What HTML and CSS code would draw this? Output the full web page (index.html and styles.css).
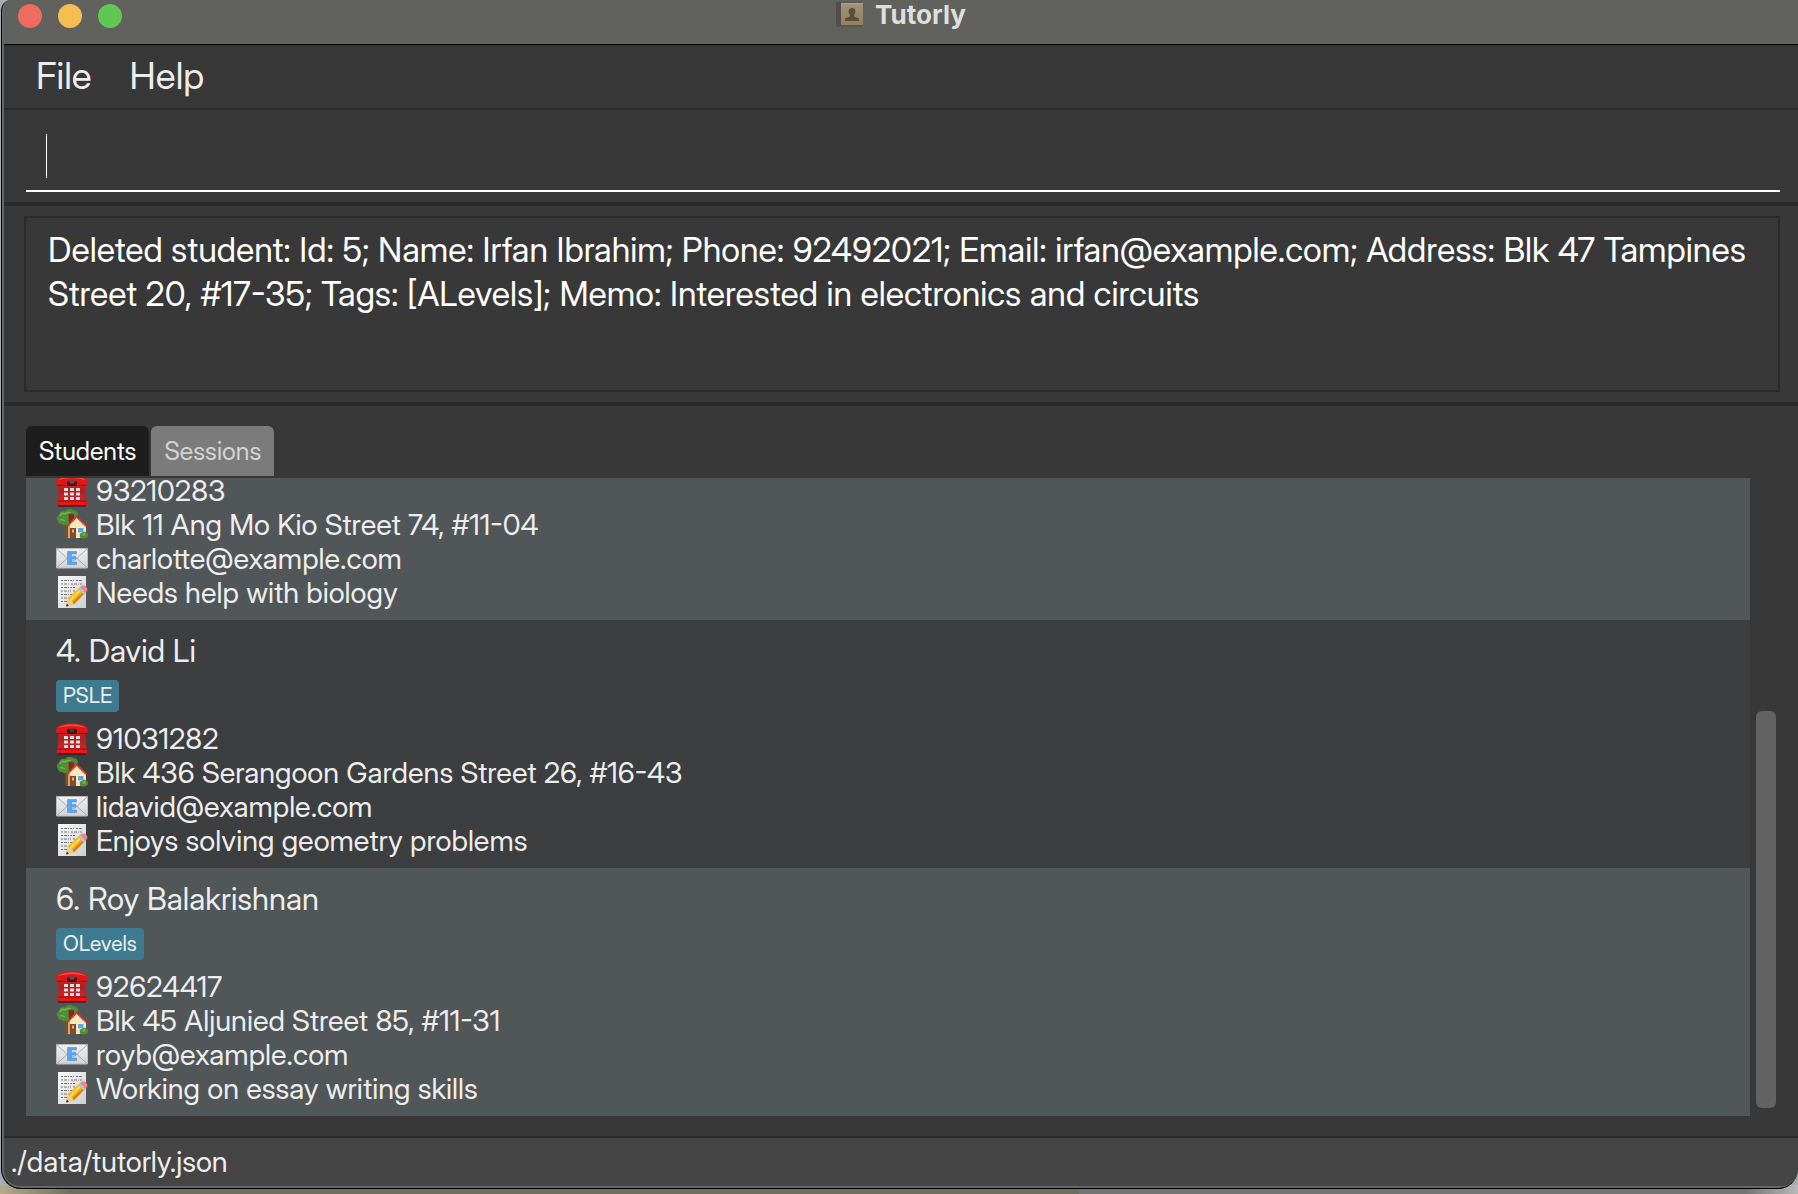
FILE: index.html
```html
<!DOCTYPE html>
<html lang="en">
<head>
<meta charset="utf-8">
<title>Tutorly</title>
<link rel="stylesheet" href="styles.css">
</head>
<body>
<svg class="sprite" aria-hidden="true">
  <defs>
    <linearGradient id="red" x1="0" y1="0" x2="0" y2="1"><stop offset="0" stop-color="#d8201e"/><stop offset=".4" stop-color="#b02024"/><stop offset="1" stop-color="#c42a2c"/></linearGradient>
    <linearGradient id="paper" x1="0" y1="0" x2="1" y2="1"><stop offset="0" stop-color="#fafafa"/><stop offset="1" stop-color="#cfcfcf"/></linearGradient>
    <linearGradient id="letter" x1="0" y1="0" x2="0" y2="1"><stop offset="0" stop-color="#f0f0f0"/><stop offset="1" stop-color="#d2d2d2"/></linearGradient>
    <linearGradient id="book" x1="0" y1="0" x2="0" y2="1"><stop offset="0" stop-color="#a1937a"/><stop offset="1" stop-color="#94805a"/></linearGradient>
  </defs>
  <symbol id="phone" viewBox="0 0 32 34">
    <path d="M1.500 28 2.500 12.500 7 9h18l4.500 3.500 1 15.500z" fill="url(#red)"/>
    <path d="M1 27h30v4.500H1z" fill="#ee1414"/><path d="M1 26.500h30v1H1z" fill="#8d1012"/><path d="M2 31.500h28v1H2z" fill="#310708"/>
    <path d="M11 7.500h3v2h4v-2h3V12H11z" fill="#4a1112"/>
    <path d="M0 9C0 3 7 1.500 16 1.500S32 3 32 9l-1 3-8.500.5-1.500-5Q16 5.500 11 7.500l-1.500 5L1 12z" fill="#df1718"/>
    <path d="M2 6Q7 2.500 16 2.500T30 6Q24 4 16 4T2 6" fill="#f45b50"/>
    <path d="M1 11.500h8.500M22.500 11.500H31" stroke="#8a1012"/>
    <path d="M8 14h4v3H8zm6 0h4v3h-4zm6 0h4v3h-4zM8 18.500h4v3H8zm6 0h4v3h-4zm6 0h4v3h-4zM8 23h4v3H8zm6 0h4v3h-4zm6 0h4v3h-4z" fill="#ecdcdc"/>
  </symbol>
  <symbol id="house" viewBox="0 0 32 34">
    <path d="M9 12h4l-1 18H9.500z" fill="#79512b"/>
    <path d="M2 13Q-1 9 3 7 4 2 9 3q4-4 8-1 5 0 5 5l-6 6-5 4q-3 1-5-1-4 0-4-3" fill="#4c8f32"/>
    <path d="M4 8q2-4 5-2 3-3 6-1M4 12q3-1 5 1" stroke="#72b34a" stroke-width="1.500" fill="none"/>
    <path d="M12 17 20.500 8.500 30 17v13H12z" fill="#f8e6bd"/>
    <path d="M12 16h2v14.500l-2-1z" fill="#cda873"/>
    <path d="M12.500 6.500 15 5.500l3 1V12l-5 4z" fill="#8e2423"/>
    <path d="M10 18.500 20.500 7 31.500 18l-1 1.500L20.500 10 11 19.500z" fill="#d33329"/>
    <path d="M14 20h6v10h-6z" fill="#8a482b"/><path d="M16 21.500h2v3h-2z" fill="#d7b37b"/>
    <path d="M21.500 19.500h6.500v5.500h-6.500z" fill="#eff6fa"/><path d="M22 20h5.500v4.500H22z" fill="#60a8dc"/>
    <path d="M24 28q-1-3 2-3 2-2 4-.5 2 0 2 3 0 3-4.500 3T24 28" fill="#538d32"/><circle cx="28" cy="26.500" r="1.500" fill="#78af45"/>
  </symbol>
  <symbol id="mail" viewBox="0 0 32 34">
    <path d="M.5 6.500h31v19.500H.5z" fill="url(#letter)" stroke="#bdbdbd"/>
    <path d="m1 7 12 11q3 2 6 0L31 7M1 25.500l10-9m20 9-10-9" stroke="#aaa" fill="none"/>
    <path d="M11.500 9.500h9V12h-5v2.500H20V17h-4.500v3h5v2.500h-9z" fill="#55a8f6" stroke="#4384cc" stroke-width=".5"/>
  </symbol>
  <symbol id="memo" viewBox="0 0 32 34">
    <path d="M2 0h28v32H2z" fill="url(#paper)"/>
    <path d="M5 4.500h13m2 0h6M5 8h8m2 0h11M5 11.500h14M5 15h10m2 0h4M5 18.500h11M5 22h8M5 25.500h6" stroke="#777" stroke-dasharray="2 1 3 1 1 1" fill="none"/>
    <path d="m12 22.500-2 8 8-2 11.500-12-5.500-5.500z" fill="#f4b41b"/>
    <path d="m14 24.500 12-12" stroke="#ffdc55" stroke-width="2"/>
    <path d="m18 28.500 11.500-12-1.800-1.800-12 12z" fill="#d7890e"/>
    <path d="m12 22.500-2 8 8-2-2-3z" fill="#eccb94"/><path d="m10.800 27.500-.8 3 3-.8z" fill="#333"/>
    <path d="m22 13 2-2 5.500 5-2.200 2.500z" fill="#b8c0c2"/>
    <path d="m24 11 1.500-1.200q2.500-1 4.500.7 2 2 1 4.500L29.500 16.500z" fill="#ef8589"/>
  </symbol>
</svg>

<main class="window">
  <header class="titlebar">
    <div class="lights">
      <button class="light close" aria-label="Close"></button>
      <button class="light minimise" aria-label="Minimise"></button>
      <button class="light zoom" aria-label="Zoom"></button>
    </div>
    <h1 class="title">
      <svg class="app-icon" viewBox="0 0 28 26" aria-hidden="true">
        <path d="M1 1h26v25H1z" fill="#565550"/><path d="M0 1h5v24H0z" fill="#514f4b"/>
        <path d="M5 2h22v22H5z" fill="url(#book)"/><path d="M5 2h22v1H5z" fill="#b0a58b"/>
        <path d="M16 7c4 0 4 4 2.500 6l-.5 2.500 5 2V20H9v-2.500l5-2-.5-2.500C12 11 12 7 16 7z" fill="#57503f"/>
      </svg>
      Tutorly
    </h1>
  </header>

  <nav class="menubar">
    <button class="menu">File</button>
    <button class="menu">Help</button>
  </nav>

  <section class="command">
    <input class="command-input" type="text" aria-label="Command">
  </section>

  <section class="result">
    <output class="result-box">Deleted student: Id: 5; Name: Irfan Ibrahim; Phone: 92492021; Email: irfan@example.com; Address: Blk 47 Tampines Street 20, #17-35; Tags: [ALevels]; Memo: Interested in electronics and circuits</output>
  </section>

  <section class="content">
    <div class="tabs" role="tablist">
      <button class="tab selected" role="tab" aria-selected="true">Students</button>
      <button class="tab" role="tab" aria-selected="false">Sessions</button>
    </div>
    <div class="panel">
      <ul class="list">
        <li class="card alt">
          <p class="line"><svg class="icon"><use href="#phone"/></svg>93210283</p>
          <p class="line"><svg class="icon"><use href="#house"/></svg>Blk 11 Ang Mo Kio Street 74, #11-04</p>
          <p class="line"><svg class="icon"><use href="#mail"/></svg>charlotte@example.com</p>
          <p class="line"><svg class="icon"><use href="#memo"/></svg>Needs help with biology</p>
        </li>
        <li class="card">
          <h2 class="name">4. David Li</h2>
          <span class="tag">PSLE</span>
          <p class="line"><svg class="icon"><use href="#phone"/></svg>91031282</p>
          <p class="line"><svg class="icon"><use href="#house"/></svg>Blk 436 Serangoon Gardens Street 26, #16-43</p>
          <p class="line"><svg class="icon"><use href="#mail"/></svg>lidavid@example.com</p>
          <p class="line"><svg class="icon"><use href="#memo"/></svg>Enjoys solving geometry problems</p>
        </li>
        <li class="card alt">
          <h2 class="name">6. Roy Balakrishnan</h2>
          <span class="tag">OLevels</span>
          <p class="line"><svg class="icon"><use href="#phone"/></svg>92624417</p>
          <p class="line"><svg class="icon"><use href="#house"/></svg>Blk 45 Aljunied Street 85, #11-31</p>
          <p class="line"><svg class="icon"><use href="#mail"/></svg>royb@example.com</p>
          <p class="line"><svg class="icon"><use href="#memo"/></svg>Working on essay writing skills</p>
        </li>
      </ul>
      <div class="scrollbar"><div class="thumb"></div></div>
    </div>
  </section>

  <footer class="statusbar">./data/tutorly.json</footer>
</main>
</body>
</html>
```
FILE: styles.css
```css
* { box-sizing: border-box; }

body {
  margin: 0;
  height: 100vh;
  padding: 0 0 5px 1px;
  overflow: hidden;
  background:
    linear-gradient(90deg, #b5ab8c, #716e60 4%, #716e60 60%, #737373 60%, #737373 97%, #b8b8b8) bottom / 100% 9px no-repeat,
    #a9abb2;
  font-family: "Inter Display", "Inter Tight", Inter, "Liberation Sans", sans-serif;
  font-variation-settings: "opsz" 32;
  color: #ededed;
}

button, input { font: inherit; font-variation-settings: inherit; color: inherit; border: 0; background: none; }
h1, h2, p, ul { margin: 0; padding: 0; font-weight: 400; }

.sprite { position: absolute; width: 0; height: 0; }

.window {
  display: flex;
  flex-direction: column;
  height: 100%;
  overflow: hidden;
  border: 1px solid #000;
  border-top: 0;
  border-right: 0;
  border-radius: 10px 0 20px 20px;
  padding: 0 0 2px 2px;
  background: #62686a;
}

.titlebar {
  display: grid;
  grid-template-columns: 1fr auto 1fr;
  height: 46px;
  flex: none;
  background: #61615e;
  border-bottom: 1px solid #2c2c2c;
  box-shadow: inset 0 -1px #000;
}
.lights { display: flex; gap: 16px; padding: 4px 0 0 14px; }
.light { width: 24px; height: 24px; padding: 0; border-radius: 50%; }
.close { background: #ed6b5f; }
.minimise { background: #f5bf4f; }
.zoom { background: #62c655; }
.title {
  display: flex;
  gap: 11px;
  font-family: Inter, "Liberation Sans", sans-serif;
  font-variation-settings: normal;
  font-size: 26px;
  font-weight: 700;
  line-height: 30px;
  color: #dededd;
}
.app-icon { width: 28px; height: 26px; margin-top: 1px; }

.menubar {
  display: flex;
  gap: 38px;
  height: 64px;
  flex: none;
  padding: 0 32px;
  background: #383838;
  border-bottom: 2px solid #2b2b2b;
}
.menu { height: 60px; padding: 0; font-size: 37px; line-height: 58px; }

.command {
  position: relative;
  flex: none;
  padding: 12px 18px 10px 22px;
  background: #383838;
  border-bottom: 4px solid #292929;
}
.command::before {
  content: "";
  position: absolute;
  left: 42px;
  top: 24px;
  width: 1px;
  height: 44px;
  background: #fff;
}
.command-input {
  display: block;
  width: 100%;
  height: 70px;
  padding: 0 20px;
  border-bottom: 2px solid #fff;
  border-radius: 0;
  outline: 0;
  font-size: 34px;
  caret-color: transparent;
}

.result {
  flex: none;
  padding: 10px 18px 10px 20px;
  background: #383838;
  border-bottom: 4px solid #292929;
}
.result-box {
  display: block;
  height: 176px;
  padding: 10px 22px;
  border: 2px solid #2a2a2a;
  font-size: 34px;
  line-height: 44px;
  color: #fff;
}

.content {
  display: flex;
  flex-direction: column;
  flex: 1;
  min-height: 0;
  padding: 20px 22px 20px 22px;
  background: #383838;
}
.tabs { display: flex; gap: 2px; flex: none; margin-bottom: 2px; }
.tab {
  height: 50px;
  padding: 0 13px;
  border-radius: 6px 6px 0 0;
  background: #7b7b7b;
  color: #d2d2d2;
  font-size: 25px;
}
.tab.selected { background: #1d1d1d; color: #fff; }

.panel { display: flex; gap: 6px; flex: 1; min-height: 0; }
.list {
  display: flex;
  flex-direction: column;
  justify-content: flex-end;
  flex: 1;
  overflow: hidden;
  list-style: none;
}
.card { flex: none; padding: 10px 30px; background: #3c3e3f; }
.card.alt { background: #515658; }
.name { font-size: 31px; line-height: 42px; }
.tag {
  display: block;
  width: fit-content;
  margin: 8px 0 10px;
  padding: 0 7px;
  border-radius: 4px;
  background: #3e7b91;
  font-size: 21px;
  line-height: 32px;
}
.line { display: flex; gap: 8px; font-size: 29px; line-height: 34px; height: 34px; }
.icon { width: 32px; height: 34px; flex: none; }

.scrollbar { display: flex; flex-direction: column; justify-content: flex-end; width: 20px; padding-bottom: 8px; }
.thumb { height: 63%; border-radius: 6px; background: #636363; }

.statusbar {
  flex: none;
  padding: 0 7px;
  border-top: 2px solid #2b2b2b;
  border-radius: 0 0 16px 16px;
  background: #454545;
  font-size: 29px;
  line-height: 48px;
}
```
